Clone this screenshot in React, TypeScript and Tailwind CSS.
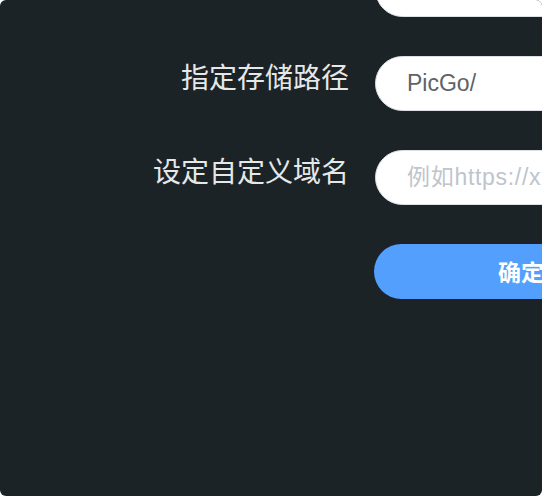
// Storage settings form (dark panel), cropped view
const rows = [
  { label: "", value: "", placeholder: "" },
  { label: "指定存储路径", value: "PicGo/", placeholder: "" },
  { label: "设定自定义域名", value: "", placeholder: "例如https://xxx.com" },
];

export default function App() {
  return (
    <div className="w-[542px] h-[496px] bg-white">
      <div className="w-full h-full bg-[#1c2327] rounded-[6px] overflow-hidden">
        <div className="-mt-[38px] flex flex-col gap-[39px]">
          {rows.map((r, i) => (
            <div key={i} className="flex items-start h-[55px]">
              <label className="w-[349px] shrink-0 text-right text-[28px] leading-[40px] text-[#e6e8e8] font-['Noto_Sans_CJK_SC',sans-serif]">
                {r.label}
              </label>
              <input
                readOnly
                defaultValue={r.value}
                placeholder={r.placeholder}
                className="ml-[26px] w-[294px] shrink-0 h-[55px] rounded-full border border-[#dcdfe6] bg-white pl-[31px] pr-4 text-[23px] text-[#606266] placeholder:text-[#c0c4cc] placeholder:tracking-[0.7px] outline-none font-['Liberation_Sans','Noto_Sans_CJK_SC',sans-serif]"
              />
            </div>
          ))}
          <div className="flex h-[55px]">
            <div className="w-[349px] shrink-0" />
            <button className="ml-[25px] w-[294px] shrink-0 h-[55px] rounded-full bg-[#539ffe] text-white text-[23px] font-bold font-['Noto_Sans_CJK_SC',sans-serif]">
              确定
            </button>
          </div>
        </div>
      </div>
    </div>
  );
}
